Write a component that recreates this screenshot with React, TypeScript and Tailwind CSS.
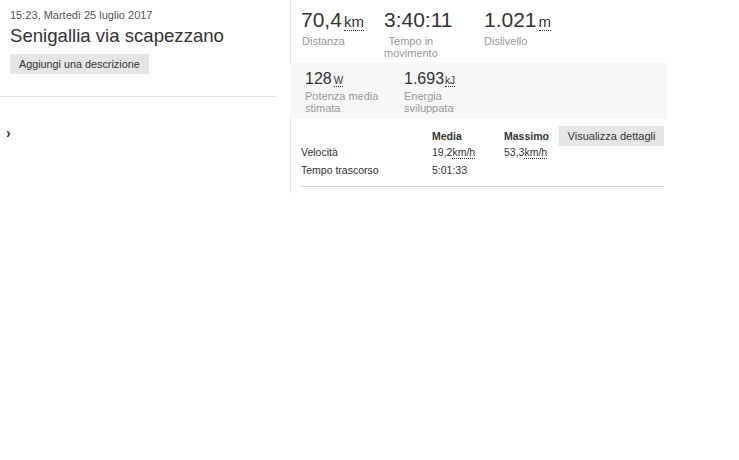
import React from 'react';

const font = { fontFamily: '"Liberation Sans", Arial, sans-serif' };

// valore con unità sottolineata a puntini
const Unit: React.FC<{ children: React.ReactNode; className?: string }> = ({ children, className }) => (
  <abbr className={`no-underline border-b border-dotted border-[#333] leading-none ${className ?? ''}`}>{children}</abbr>
);

const App: React.FC = () => {
  return (
    <div className="flex w-[739px] h-[460px] bg-white text-[#333]" style={font}>
      {/* Colonna sinistra */}
      <div className="w-[290px] shrink-0">
        <div className="pl-[10px] pt-[9px]">
          <div className="text-[11px] leading-[13px] text-[#555]">15:23, Martedì 25 luglio 2017</div>
          <h1 className="text-[18.6px] leading-[22px] mt-[3px] text-[#333]">Senigallia via scapezzano</h1>
          <button className="mt-[7px] h-[20px] px-[9px] bg-[#e6e6e6] text-[10.8px] text-[#333]">
            Aggiungi una descrizione
          </button>
        </div>
        <div className="mt-[21px] mr-[14px] border-t border-[#e2e2e2]" />
        <div className="mt-[29px] pl-[6px] text-[14px] leading-[14px] font-bold text-[#333]">›</div>
      </div>

      {/* Colonna destra */}
      <div className="w-[377px] h-[193px] border-l border-[#e0e0e0]">
        <div className="flex pl-[10px] pt-[8px] h-[63px]">
          <div className="w-[83px]">
            <div className="text-[21px] leading-[24px]">
              70,4<Unit className="text-[15px] ml-[2px]">km</Unit>
            </div>
            <div className="text-[11px] leading-[12px] text-[#999] mt-[3px] pl-px">Distanza</div>
          </div>
          <div className="w-[100px]">
            <div className="text-[21px] leading-[24px]">3:40:11</div>
            <div className="inline-block text-center text-[11px] leading-[12px] text-[#999] mt-[3px]">
              Tempo in
              <br />
              movimento
            </div>
          </div>
          <div>
            <div className="text-[21px] leading-[24px]">
              1.021<Unit className="text-[15px] ml-[2px]">m</Unit>
            </div>
            <div className="text-[11px] leading-[12px] text-[#999] mt-[3px]">Dislivello</div>
          </div>
        </div>

        <div className="-ml-px flex bg-[#f7f7f7] h-[56px] pl-[15px] pt-[7px]">
          <div className="w-[99px]">
            <div className="text-[16px] leading-[18px]">
              128<Unit className="text-[10px] ml-[2px]">W</Unit>
            </div>
            <div className="text-[11px] leading-[12px] text-[#999] mt-[2px]">
              Potenza media
              <br />
              stimata
            </div>
          </div>
          <div>
            <div className="text-[16px] leading-[18px]">
              1.693<Unit className="text-[10px] ml-[1px]">kJ</Unit>
            </div>
            <div className="text-[11px] leading-[12px] text-[#999] mt-[2px]">
              Energia
              <br />
              sviluppata
            </div>
          </div>
        </div>

        <div className="pl-[10px] pr-[3px] pt-[7px]">
          <div className="grid grid-cols-[131px_72px_55px_105px] items-center text-[10.5px]">
            <div />
            <div className="font-bold pt-[1px]">Media</div>
            <div className="font-bold pt-[1px]">Massimo</div>
            <button className="h-[20px] bg-[#e6e6e6] text-[11px] text-[#333]">Visualizza dettagli</button>
          </div>
          <div className="grid grid-cols-[131px_72px_55px_105px] text-[10.5px] leading-[18px] mt-[-3px]">
            <div>Velocità</div>
            <div>
              19,2<Unit>km/h</Unit>
            </div>
            <div>
              53,3<Unit>km/h</Unit>
            </div>
            <div />
            <div>Tempo trascorso</div>
            <div>5:01:33</div>
          </div>
          <div className="mt-[7px] border-t border-[#d6d6d6]" />
        </div>
      </div>
    </div>
  );
};

export default App;
